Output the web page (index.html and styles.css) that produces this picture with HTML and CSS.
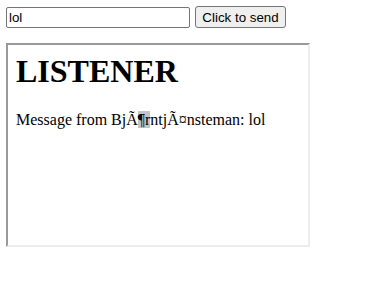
FILE: index.html
```html
<!DOCTYPE html>
<html lang="en">
<head>
    <meta charset="UTF-8">
    <title>Sender</title>
    <link rel="stylesheet" href="styles.css">
</head>
<body>
    <div class="send-row">
        <input type="text" id="msg" class="msg-input" value="lol">
        <button id="send" class="send-btn">Click to send</button>
    </div>

    <!-- listener frame -->
    <div class="listener">
        <h1 class="listener-title">LISTENER</h1>
        <p class="listener-msg">Message from BjÃ<span class="sel">¶r</span>ntjÃ¤nsteman: lol</p>
    </div>
</body>
</html>
```

FILE: styles.css
```css
body {
    margin: 6px;
    font-family: "Liberation Serif", "Times New Roman", serif;
    background: #fff;
}

.send-row {
    display: flex;
    gap: 5px;
    align-items: center;
}

.msg-input {
    width: 184px;
    height: 21px;
    box-sizing: border-box;
    margin: 0;
    padding: 1px 2px;
    border: 1px solid #767676;
    border-radius: 2px;
    font-family: "Liberation Sans", Arial, sans-serif;
    font-size: 13.33px;
}

.send-btn {
    width: 91px;
    height: 22px;
    box-sizing: border-box;
    margin: 0;
    padding: 1px 6px;
    border: 1px solid #767676;
    border-radius: 3px;
    background: #efefef;
    font-family: "Liberation Sans", Arial, sans-serif;
    font-size: 13.33px;
    color: #000;
}

/* looks like an iframe with the default inset border */
.listener {
    margin-top: 15px;
    padding: 8px;
    width: 284px;
    height: 184px;
    border: 2px solid;
    border-color: #999 #ececec #ececec #999;
}

.listener-title {
    margin: 0 0 21px;
    font-size: 32px;
}

.listener-msg {
    margin: 0;
    font-size: 16px;
}

.sel {
    background: #c4c4c4;
}
```
